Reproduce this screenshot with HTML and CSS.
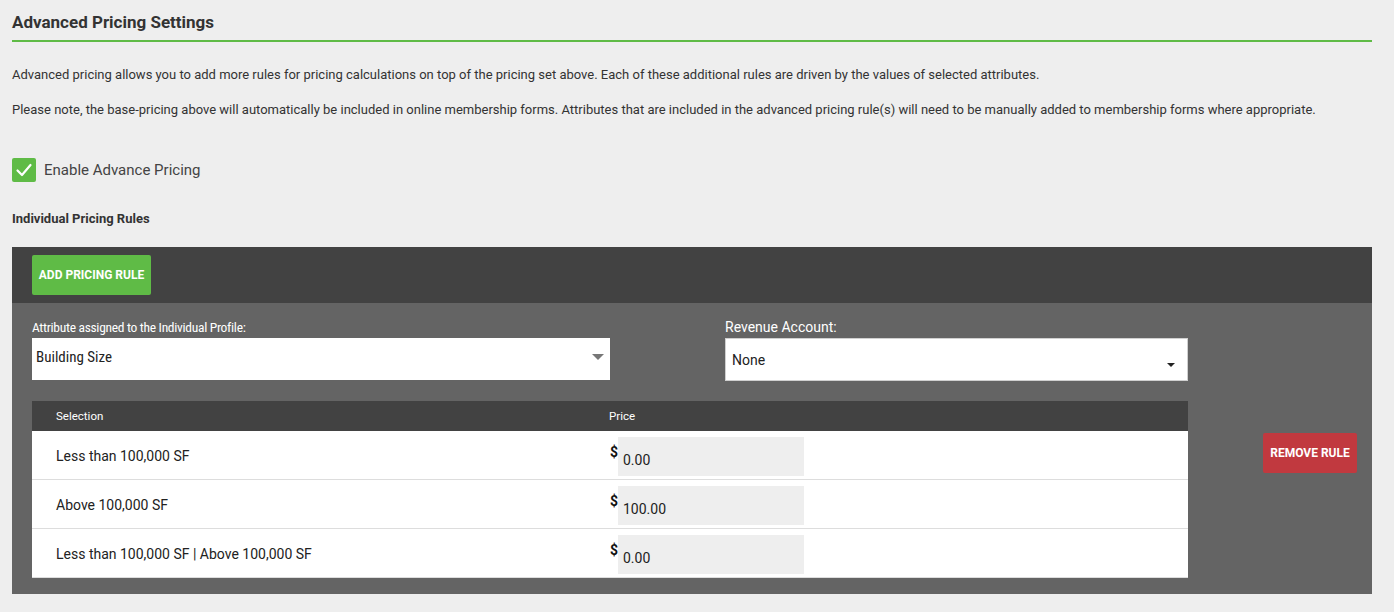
FILE: index.html
```html
<!DOCTYPE html>
<html lang="en">
<head>
    <meta charset="UTF-8">
    <meta name="viewport" content="width=device-width, initial-scale=1.0">
    <title>Advanced Pricing Settings</title>
    <link rel="stylesheet" href="styles.css">
</head>
<body>

    <div class="page">
        <h2 class="section-title">Advanced Pricing Settings</h2>

        <p class="intro">Advanced pricing allows you to add more rules for pricing calculations on top of the pricing set above. Each of these additional rules are driven by the values of selected attributes.</p>
        <p class="intro second">Please note, the base-pricing above will automatically be included in online membership forms. Attributes that are included in the advanced pricing rule(s) will need to be manually added to membership forms where appropriate.</p>

        <label class="check">
            <span class="check-box">
                <svg width="24" height="24" viewBox="0 0 24 24"><path d="M5.5 12.5l4.5 4.5 8.5-10" fill="none" stroke="#fff" stroke-width="2.2" stroke-linecap="round" stroke-linejoin="round"/></svg>
            </span>
            Enable Advance Pricing
        </label>

        <h4 class="sub-title">Individual Pricing Rules</h4>

        <div class="rules">
            <div class="rules-toolbar">
                <button class="btn btn-green">Add Pricing Rule</button>
            </div>

            <div class="rule">
                <div class="rule-main">
                    <div class="fields">
                        <div class="field">
                            <div class="field-label condensed">Attribute assigned to the Individual Profile:</div>
                            <div class="select select-flat">
                                <span class="condensed">Building Size</span>
                                <span class="arrow-grey"></span>
                            </div>
                        </div>
                        <div class="field">
                            <div class="field-label">Revenue Account:</div>
                            <div class="select select-native">
                                <span>None</span>
                                <span class="arrow-black"></span>
                            </div>
                        </div>
                    </div>

                    <div class="price-table">
                        <div class="pt-head">
                            <div class="pt-cell first">Selection</div>
                            <div class="pt-cell">Price</div>
                        </div>
                        <div class="pt-row">
                            <div class="pt-cell first">Less than 100,000 SF</div>
                            <div class="pt-cell price"><span class="dollar">$</span><span class="price-input">0.00</span></div>
                        </div>
                        <div class="pt-row">
                            <div class="pt-cell first">Above 100,000 SF</div>
                            <div class="pt-cell price"><span class="dollar">$</span><span class="price-input">100.00</span></div>
                        </div>
                        <div class="pt-row">
                            <div class="pt-cell first">Less than 100,000 SF | Above 100,000 SF</div>
                            <div class="pt-cell price"><span class="dollar">$</span><span class="price-input">0.00</span></div>
                        </div>
                    </div>
                </div>

                <div class="rule-side">
                    <button class="btn btn-red">Remove Rule</button>
                </div>
            </div>
        </div>
    </div>

</body>
</html>
```

FILE: styles.css
```css
body {
    margin: 0;
    background: #eeeeee;
    font-family: 'Roboto', 'Liberation Sans', sans-serif;
    color: #333;
}

.page {
    width: 1360px;
    margin-left: 12px;
}

.condensed {
    font-family: 'Roboto Condensed', 'Liberation Sans Narrow', 'Roboto', sans-serif;
    font-stretch: condensed;
}

.section-title {
    font-size: 17px;
    line-height: 20px;
    font-weight: bold;
    margin: 0;
    padding: 12px 0 8px;
    border-bottom: 2px solid #5fbb46;
}

.intro {
    font-size: 13px;
    line-height: 18px;
    margin: 24px 0 0;
}

.intro.second {
    margin-top: 17px;
}

.check {
    display: flex;
    align-items: center;
    gap: 8px;
    margin-top: 39px;
    font-size: 15px;
    color: #444;
}

.check-box {
    width: 24px;
    height: 24px;
    background: #5fbb46;
    border-radius: 2px;
}

.check-box svg {
    display: block;
}

.sub-title {
    font-size: 13px;
    line-height: 16px;
    font-weight: bold;
    margin: 29px 0 0;
}

.rules {
    margin-top: 20px;
    background: #646464;
}

.rules-toolbar {
    background: #424242;
    padding: 8px 20px;
}

.btn {
    border: none;
    color: #fff;
    font-family: 'Roboto', sans-serif;
    font-weight: bold;
    font-size: 12px;
    text-transform: uppercase;
    border-radius: 2px;
    height: 40px;
    padding: 0;
    cursor: pointer;
}

.btn-green {
    background: #5fbb46;
    width: 119px;
}

.btn-red {
    background: #c1393f;
    width: 94px;
}

.rule {
    display: flex;
    padding: 16px 15px 16px 20px;
}

.rule-main {
    width: 1156px;
}

.rule-side {
    flex: 1;
    display: flex;
    justify-content: flex-end;
    padding-top: 114px;
}

.fields {
    display: grid;
    grid-template-columns: 578px 463px;
    column-gap: 115px;
}

.field-label {
    color: #fff;
    font-size: 14px;
    line-height: 16px;
    margin-bottom: 3px;
}

.field-label.condensed {
    font-size: 13.5px;
    letter-spacing: -0.3px;
}

.select {
    background: #fff;
    display: flex;
    align-items: center;
    justify-content: space-between;
    font-size: 14px;
    color: #222;
    box-sizing: border-box;
}

.select-flat {
    height: 42px;
    padding: 0 6px 4px 4px;
}

.select-flat .condensed {
    font-size: 15px;
}

.select-native {
    height: 43px;
    border: 1px solid #d0d0d0;
    padding: 0 12px 0 6px;
}

.arrow-grey {
    width: 0;
    height: 0;
    border-left: 6px solid transparent;
    border-right: 6px solid transparent;
    border-top: 6px solid #777;
}

.arrow-black {
    width: 0;
    height: 0;
    margin-top: 10px;
    border-left: 4px solid transparent;
    border-right: 4px solid transparent;
    border-top: 4px solid #222;
}

.price-table {
    margin-top: 20px;
    background: #fff;
}

.pt-head {
    display: grid;
    grid-template-columns: 577px 1fr;
    background: #424242;
    color: #fff;
    font-size: 11.5px;
    height: 30px;
    align-items: center;
}

.pt-row {
    display: grid;
    grid-template-columns: 577px 1fr;
    height: 48px;
    border-bottom: 1px solid #ddd;
    font-size: 14px;
    color: #222;
    align-items: center;
}

.pt-cell.first {
    padding-left: 24px;
}

.pt-row .pt-cell.first {
    margin-top: 2px;
}

.pt-cell.price {
    display: flex;
    align-items: flex-start;
    align-self: start;
    padding-top: 6px;
}

.dollar {
    font-weight: bold;
    font-size: 14px;
    line-height: 16px;
    color: #111;
    width: 8px;
    margin-top: 7px;
    margin-left: 1px;
}

.price-input {
    background: #eeeeee;
    width: 186px;
    height: 39px;
    box-sizing: border-box;
    padding: 15px 5px 0;
    font-size: 14px;
}
```
